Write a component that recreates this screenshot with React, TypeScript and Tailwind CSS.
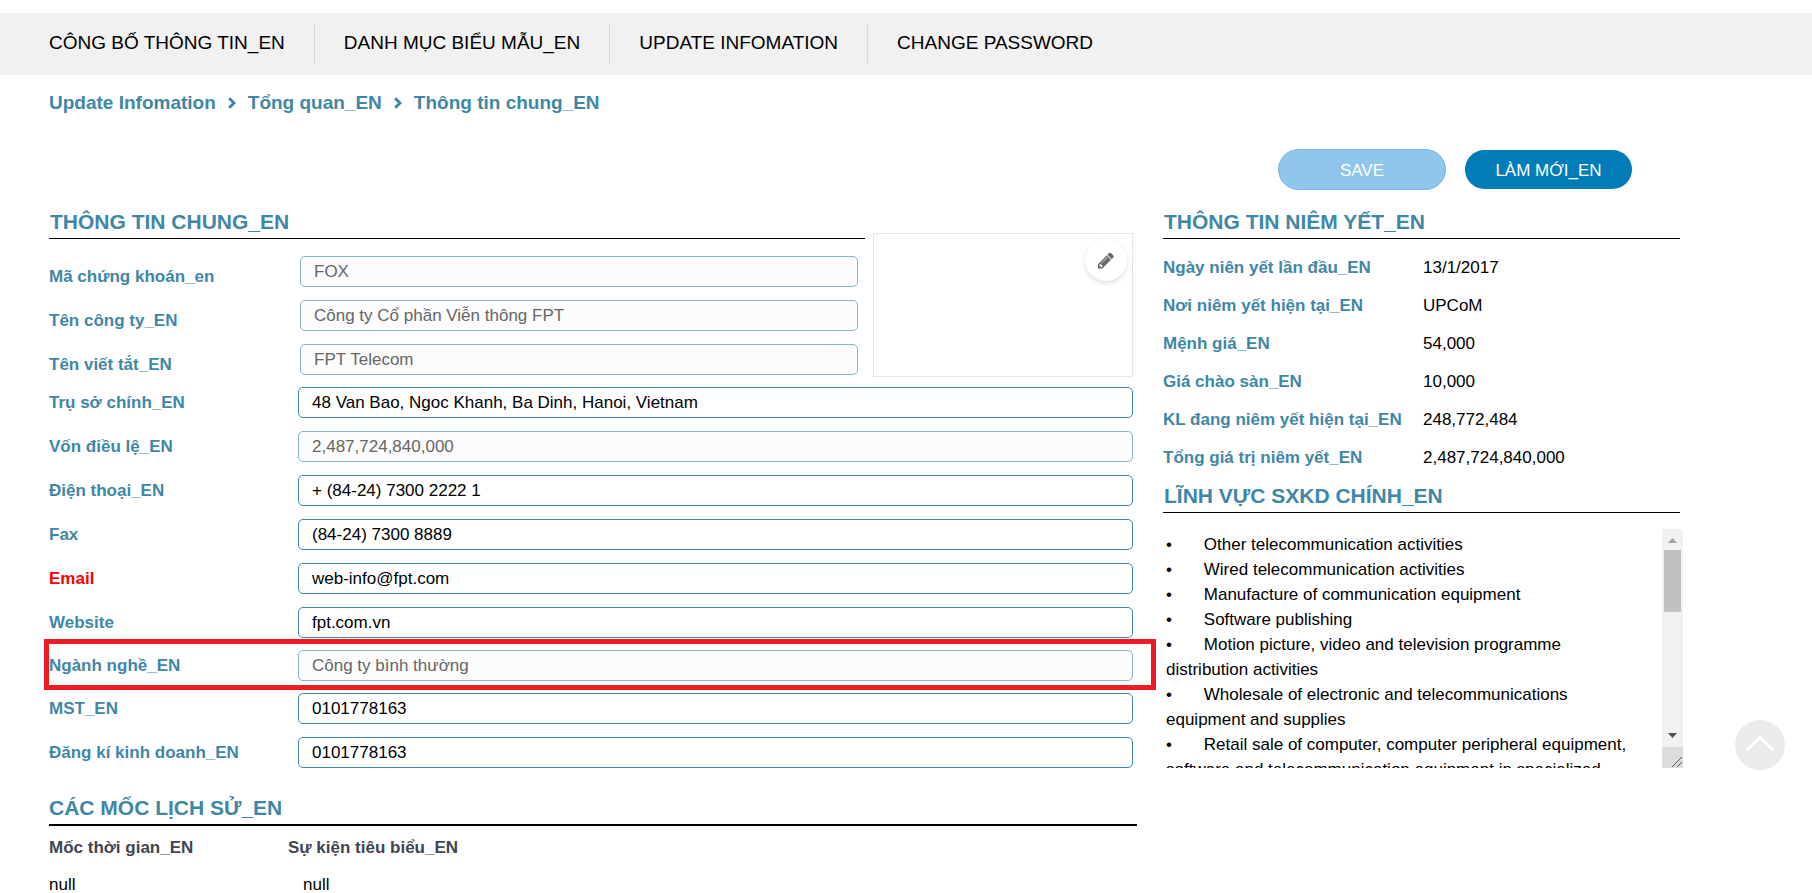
import React from "react";

type Field = { id: string; label: string; value: string; disabled?: boolean; error?: boolean };

const companyFields: Field[] = [
  { id: "ticker", label: "Mã chứng khoán_en", value: "FOX", disabled: true },
  { id: "name", label: "Tên công ty_EN", value: "Công ty Cổ phần Viễn thông FPT", disabled: true },
  { id: "short-name", label: "Tên viết tắt_EN", value: "FPT Telecom", disabled: true },
];

const contactFields: Field[] = [
  { id: "address", label: "Trụ sở chính_EN", value: "48 Van Bao, Ngoc Khanh, Ba Dinh, Hanoi, Vietnam" },
  { id: "capital", label: "Vốn điều lệ_EN", value: "2,487,724,840,000", disabled: true },
  { id: "phone", label: "Điện thoại_EN", value: "+ (84-24) 7300 2222 1" },
  { id: "fax", label: "Fax", value: "(84-24) 7300 8889" },
  { id: "email", label: "Email", value: "web-info@fpt.com", error: true },
  { id: "website", label: "Website", value: "fpt.com.vn" },
];

const industryField: Field = { id: "industry", label: "Ngành nghề_EN", value: "Công ty bình thường", disabled: true };

const registrationFields: Field[] = [
  { id: "tax", label: "MST_EN", value: "0101778163" },
  { id: "business", label: "Đăng kí kinh doanh_EN", value: "0101778163" },
];

const listing = [
  ["Ngày niên yết lần đầu_EN", "13/1/2017"],
  ["Nơi niêm yết hiện tại_EN", "UPCoM"],
  ["Mệnh giá_EN", "54,000"],
  ["Giá chào sàn_EN", "10,000"],
  ["KL đang niêm yết hiện tại_EN", "248,772,484"],
  ["Tổng giá trị niêm yết_EN", "2,487,724,840,000"],
];

const business = [
  "Other telecommunication activities",
  "Wired telecommunication activities",
  "Manufacture of communication equipment",
  "Software publishing",
  "Motion picture, video and television programme distribution activities",
  "Wholesale of electronic and telecommunications equipment and supplies",
  "Retail sale of computer, computer peripheral equipment, software and telecommunication equipment in specialized",
]
  .map((line) => "•\t" + line)
  .join("\n");

const menu = ["CÔNG BỐ THÔNG TIN_EN", "DANH MỤC BIỂU MẪU_EN", "UPDATE INFOMATION", "CHANGE PASSWORD"];
const crumbs = ["Update Infomation", "Tổng quan_EN", "Thông tin chung_EN"];

function PencilIcon() {
  return (
    <svg viewBox="0 0 1536 1792" className="h-[19px] w-4" fill="currentColor" aria-hidden="true">
      <path
        fillRule="evenodd"
        d="M363 1536l91-91-235-235-91 91v107h128v128h107zM886 608q0-22-22-22-10 0-17 7l-542 542q-7 7-7 17 0 22 22 22 10 0 17-7l542-542q7-7 7-17zM832 416l416 416-832 832h-416v-416zM1515 512q0 53-37 90l-166 166-416-416 166-165q36-38 90-38 53 0 91 38l235 234q37 39 37 91z"
      />
    </svg>
  );
}

function TextField({ field }: { field: Field }) {
  return (
    <input
      id={field.id}
      type="text"
      defaultValue={field.value}
      disabled={field.disabled}
      className="h-[31px] w-full min-w-0 rounded-[5px] border border-[#3f87a6] bg-white px-[13px] text-[17px] text-black disabled:border-[#85b3c7] disabled:bg-[#fcfcfc] disabled:text-[#666]"
    />
  );
}

function FieldRow({ field }: { field: Field }) {
  return (
    <div className="flex items-center">
      <label
        htmlFor={field.id}
        className={
          field.error
            ? "w-[249px] shrink-0 text-[17px] font-bold text-[#ff0000]"
            : "w-[249px] shrink-0 text-[17px] font-bold text-[#3f87a6]"
        }
      >
        {field.label}
      </label>
      <TextField field={field} />
    </div>
  );
}

function Heading({ children }: { children: React.ReactNode }) {
  return (
    <h2 className="border-b border-black pt-0.5 pl-px text-[21px] leading-8 font-bold text-[#3f87a6]">{children}</h2>
  );
}

function Crumb({ text, first }: { text: string; first: boolean }) {
  return (
    <li className="flex items-center">
      {!first && (
        <svg viewBox="0 0 8 12" className="mx-3 h-3 w-2" fill="none" stroke="currentColor" strokeWidth="3">
          <path d="M1.2 1.2 6 6 1.2 10.8" />
        </svg>
      )}
      <a href="#">{text}</a>
    </li>
  );
}

export default function App() {
  return (
    <div className="relative bg-white pt-[13px] font-['Liberation_Sans',Arial,sans-serif] text-[17px] text-black">
      <nav className="flex h-[62px] items-center bg-[#f1f1f1] pl-5">
        {menu.map((item, i) => (
          <a
            key={item}
            href="#"
            className={
              i < menu.length - 1
                ? "flex h-10 items-center border-r border-[#d9d9d9] px-[29px] pb-0.5 text-[19px]"
                : "flex h-10 items-center px-[29px] pb-0.5 text-[19px]"
            }
          >
            {item}
          </a>
        ))}
      </nav>

      <div className="pr-[129px] pl-[49px]">
        <ol className="flex h-[56px] items-center text-[19px] font-bold text-[#3f87a6]">
          {crumbs.map((c, i) => (
            <Crumb key={c} text={c} first={i === 0} />
          ))}
        </ol>

        <div className="flex items-center justify-end gap-[19px] pt-[18px] pr-[51px]">
          <button
            disabled
            className="h-[41px] w-[168px] rounded-full border border-[#7ab7e2] bg-[#90c5ec] pt-0.5 text-[17px] text-white"
          >
            SAVE
          </button>
          <button className="h-[39px] w-[167px] rounded-full bg-[#007db8] pt-0.5 text-[17px] text-white">
            LÀM MỚI_EN
          </button>
        </div>

        <div className="grid grid-cols-[1088fr_520fr] gap-[26px] pt-[14px]">
          <form>
            <div className="flex gap-2 pr-1">
              <div className="flex-1">
                <Heading>THÔNG TIN CHUNG_EN</Heading>
                <div className="flex flex-col gap-[13px] pt-[17px] pr-[7px]">
                  {companyFields.map((f) => (
                    <div key={f.id} className="flex items-center">
                      <label
                        htmlFor={f.id}
                        className="w-[251px] shrink-0 pt-[10px] text-[17px] leading-[21px] font-bold text-[#3f87a6]"
                      >
                        {f.label}
                      </label>
                      <TextField field={f} />
                    </div>
                  ))}
                </div>
              </div>
              <div className="mt-[29px] flex h-36 w-[260px] items-start justify-end border border-[#e6e6e6] p-[5px]">
                <button
                  type="button"
                  aria-label="Edit logo"
                  className="flex size-[42px] items-center justify-center rounded-full bg-white text-[#6b6b6b] shadow-[0_2px_5px_rgba(0,0,0,0.14)]"
                >
                  <PencilIcon />
                </button>
              </div>
            </div>

            <div className="flex flex-col gap-[13px] pt-[10px] pr-1">
              {contactFields.map((f) => (
                <FieldRow key={f.id} field={f} />
              ))}
            </div>
            <div className="relative my-3 pr-1">
              <FieldRow field={industryField} />
              <div className="pointer-events-none absolute -top-[11px] -right-[19px] -bottom-[9px] -left-[5px] border-[5px] border-[#ed1c24]" />
            </div>
            <div className="flex flex-col gap-[13px] pr-1">
              {registrationFields.map((f) => (
                <FieldRow key={f.id} field={f} />
              ))}
            </div>
          </form>

          <section>
            <div className="pr-[3px]">
              <Heading>THÔNG TIN NIÊM YẾT_EN</Heading>
            </div>
            <dl className="grid grid-cols-[260px_1fr] gap-y-[13px] pt-4 leading-[25px]">
              {listing.map(([name, value]) => (
                <React.Fragment key={name}>
                  <dt className="font-bold whitespace-nowrap text-[#3f87a6]">{name}</dt>
                  <dd>{value}</dd>
                </React.Fragment>
              ))}
            </dl>
            <div className="pt-2 pr-[3px]">
              <Heading>LĨNH VỰC SXKD CHÍNH_EN</Heading>
            </div>
            <div className="mt-4 flex h-[239px]">
              <textarea
                aria-label="Business lines"
                defaultValue={business}
                className="min-w-0 flex-1 resize-none overflow-hidden py-[3px] pr-[21px] pl-[3px] text-[17px] leading-[25px] [tab-size:8]"
              />
              <div aria-hidden="true" className="flex w-[21px] flex-col bg-[#f1f1f1]">
                <svg viewBox="0 0 21 21" className="size-[21px]">
                  <path d="M6 14 10.5 9 15 14Z" fill="#a3a3a3" />
                </svg>
                <div className="mx-0.5 h-[62px] bg-[#c1c1c1]" />
                <div className="flex-1" />
                <svg viewBox="0 0 21 21" className="size-[21px]">
                  <path d="M6 7 10.5 12 15 7Z" fill="#505050" />
                </svg>
                <svg viewBox="0 0 21 21" className="size-[21px] bg-[#dcdcdc]">
                  <path d="M10 20 20 10M15 20 20 15" stroke="#555" strokeWidth="1" />
                </svg>
              </div>
            </div>
          </section>

          <section className="-mt-1">
            <h2 className="border-b-2 border-black pt-0.5 text-[21px] leading-8 font-bold text-[#3f87a6]">
              CÁC MỐC LỊCH SỬ_EN
            </h2>
            <table className="w-full text-left">
              <thead>
                <tr className="h-11 text-[#3f4551]">
                  <th className="w-[239px] font-bold">Mốc thời gian_EN</th>
                  <th className="font-bold">Sự kiện tiêu biểu_EN</th>
                </tr>
              </thead>
              <tbody>
                <tr className="h-[30px]">
                  <td>null</td>
                  <td className="pl-[15px]">null</td>
                </tr>
              </tbody>
            </table>
          </section>
        </div>
      </div>

      <button
        aria-label="Back to top"
        className="fixed right-[27px] bottom-[123px] flex size-[50px] items-center justify-center rounded-full bg-[#ebebeb] pb-1 text-white"
      >
        <svg viewBox="0 0 28 16" className="h-4 w-7" fill="none" stroke="currentColor" strokeWidth="3">
          <path d="M1 15 14 2.5 27 15" />
        </svg>
      </button>
    </div>
  );
}
